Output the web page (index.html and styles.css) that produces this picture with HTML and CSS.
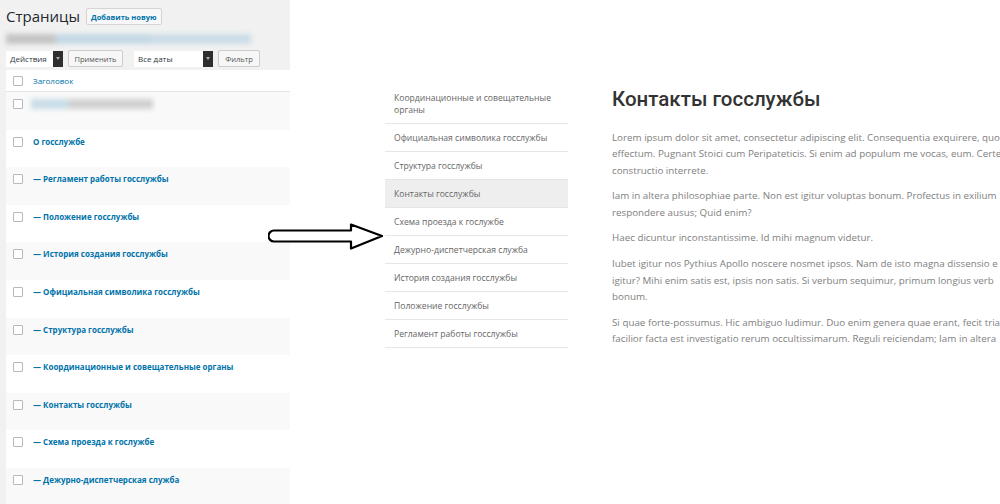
FILE: index.html
```html
<!DOCTYPE html>
<html lang="ru">
<head>
<meta charset="utf-8">
<title>Страницы</title>
<link rel="stylesheet" href="styles.css">
</head>
<body>
<div class="wp">
  <div class="wp-top">
    <div class="wp-title-row">
      <h1 class="wp-title">Страницы</h1>
      <span class="btn-add">Добавить новую</span>
    </div>
    <div class="wp-subsub"><span class="blur-gray"></span><span class="blur-blue"></span><span class="blur-blue2"></span></div>
    <div class="wp-filters">
      <span class="select sel-actions">Действия<span class="sel-arrow"></span></span>
      <span class="btn">Применить</span>
      <span class="select sel-dates">Все даты<span class="sel-arrow"></span></span>
      <span class="btn">Фильтр</span>
    </div>
  </div>
  <div class="wp-body">
    <div class="wp-strip"></div>
    <div class="wp-table">
      <div class="th"><span class="cb"></span><span class="th-label">Заголовок</span></div>
      <div class="tr alt"><span class="cb"></span><span class="blur-title"></span></div>
      <div class="tr"><span class="cb"></span><span class="t">О госслужбе</span></div>
      <div class="tr alt"><span class="cb"></span><span class="t">— Регламент работы госслужбы</span></div>
      <div class="tr"><span class="cb"></span><span class="t">— Положение госслужбы</span></div>
      <div class="tr alt"><span class="cb"></span><span class="t">— История создания госслужбы</span></div>
      <div class="tr"><span class="cb"></span><span class="t">— Официальная символика госслужбы</span></div>
      <div class="tr alt"><span class="cb"></span><span class="t">— Структура госслужбы</span></div>
      <div class="tr"><span class="cb"></span><span class="t">— Координационные и совещательные органы</span></div>
      <div class="tr alt"><span class="cb"></span><span class="t">— Контакты госслужбы</span></div>
      <div class="tr"><span class="cb"></span><span class="t">— Схема проезда к гослужбе</span></div>
      <div class="tr alt"><span class="cb"></span><span class="t">— Дежурно-диспетчерская служба</span></div>
    </div>
  </div>
</div>

<svg class="arrow" width="120" height="30" viewBox="0 0 120 30" aria-hidden="true">
  <path d="M6 7.5 H83 V1.5 L114 13 L83 25.5 V18.5 H6 A5.5 5.5 0 0 1 6 7.5 Z" fill="#fff" stroke="#000" stroke-width="2.2" stroke-linejoin="round"/>
</svg>

<nav class="side">
  <div class="side-item">Координационные и совещательные<br>органы</div>
  <div class="side-item">Официальная символика госслужбы</div>
  <div class="side-item">Структура госслужбы</div>
  <div class="side-item active">Контакты госслужбы</div>
  <div class="side-item">Схема проезда к гослужбе</div>
  <div class="side-item">Дежурно-диспетчерская служба</div>
  <div class="side-item">История создания госслужбы</div>
  <div class="side-item">Положение госслужбы</div>
  <div class="side-item">Регламент работы госслужбы</div>
</nav>

<main class="content">
  <h2 class="page-title">Контакты госслужбы</h2>
  <div class="text">
    <p>Lorem ipsum dolor sit amet, consectetur adipiscing elit. Consequentia exquirere, quo<br>effectum. Pugnant Stoici cum Peripateticis. Si enim ad populum me vocas, eum. Certe<br>constructio interrete.</p>
    <p>Iam in altera philosophiae parte. Non est igitur voluptas bonum. Profectus in exilium<br>respondere ausus; Quid enim?</p>
    <p>Haec dicuntur inconstantissime. Id mihi magnum videtur.</p>
    <p>Iubet igitur nos Pythius Apollo noscere nosmet ipsos. Nam de isto magna dissensio e<br>igitur? Mihi enim satis est, ipsis non satis. Si verbum sequimur, primum longius verb<br>bonum.</p>
    <p>Si quae forte-possumus. Hic ambiguo ludimur. Duo enim genera quae erant, fecit tria<br>facilior facta est investigatio rerum occultissimarum. Reguli reiciendam; Iam in altera</p>
  </div>
</main>
</body>
</html>
```

FILE: styles.css
```css
* { box-sizing: border-box; }
html, body { margin: 0; padding: 0; }
body {
  width: 1000px;
  height: 504px;
  overflow: hidden;
  background: #fff;
  display: flex;
  align-items: flex-start;
  position: relative;
  font-family: "Open Sans", "Noto Sans", sans-serif;
}

/* ---------- WordPress admin fragment ---------- */
.wp { width: 290px; flex: none; }
.wp-top {
  background: #f1f1f1;
  height: 70px;
  padding: 6px 0 0 6px;
}
.wp-title-row { display: flex; align-items: center; gap: 6px; height: 20px; }
.wp-title {
  margin: 0;
  font-weight: 400;
  font-size: 15px;
  line-height: 20px;
  color: #23282d;
}
.btn-add {
  display: inline-flex;
  align-items: center;
  height: 17px;
  padding: 0 4px;
  border: 1px solid #d5d5d5;
  border-radius: 2px;
  background: #f7f7f7;
  color: #0073aa;
  font-size: 7.5px;
  font-weight: 700;
  margin-top: 1px;
}
.wp-subsub { display: flex; height: 13px; margin-top: 6px; filter: blur(2.5px); }
.blur-gray { width: 50px; background: #c4c4c4; height: 10px; margin-top: 2px; }
.blur-blue { width: 95px; background: #c3d9e5; height: 10px; margin-top: 2px; }
.blur-blue2 { width: 100px; background: #cbdde7; height: 10px; margin-top: 2px; }

.wp-filters { display: flex; align-items: center; margin-top: 5px; height: 17px; }
.select {
  display: inline-flex;
  align-items: center;
  height: 16px;
  background: #fff;
  color: #32373c;
  font-size: 8px;
  padding-left: 4px;
}
.sel-actions { width: 57px; }
.sel-dates { width: 79px; margin-left: 11px; }
.sel-arrow {
  margin-left: auto;
  width: 10px;
  height: 16px;
  background: #2e2e2e;
  display: flex;
  align-items: center;
  justify-content: center;
}
.sel-arrow::after {
  content: "";
  border-left: 2px solid transparent;
  border-right: 2px solid transparent;
  border-top: 3px solid #aaa;
}
.btn {
  display: inline-flex;
  align-items: center;
  justify-content: center;
  height: 17px;
  border: 1px solid #ccc;
  border-radius: 2px;
  background: #f7f7f7;
  color: #555;
  font-size: 7.5px;
  margin-left: 5px;
}
.wp-filters .btn:nth-child(2) { width: 55px; }
.wp-filters .btn:nth-child(4) { width: 42px; }

.wp-body { display: flex; }
.wp-strip { width: 6px; background: #f1f1f1; align-self: stretch; }
.wp-table { width: 284px; }
.th {
  height: 22px;
  background: #fff;
  border-bottom: 1px solid #e5e5e5;
  display: flex;
  align-items: center;
}
.th-label { color: #0073aa; font-size: 8px; margin-left: 10px; }
.cb {
  width: 10px;
  height: 10px;
  border: 1px solid #b4b9be;
  border-radius: 1px;
  background: #fff;
  margin-left: 7px;
  flex: none;
}
.tr {
  height: 37.6px;
  display: flex;
  align-items: flex-start;
  background: #fff;
  padding-top: 7px;
}
.tr.alt { background: #f9f9f9; }
.t {
  color: #0073aa;
  font-weight: 700;
  font-size: 8px;
  line-height: 10px;
  margin-left: 10px;
}
.blur-title {
  display: block;
  width: 122px;
  height: 10px;
  margin-left: 8px;
  background: linear-gradient(90deg, #c9dde8 0, #c9dde8 30%, #d0d0d0 30%, #d0d0d0 100%);
  filter: blur(2.5px);
}

/* ---------- Arrow overlay ---------- */
.arrow {
  position: absolute;
  left: 268px;
  top: 223px;
}

/* ---------- Site side menu ---------- */
.side {
  width: 183px;
  margin-left: 95px;
  margin-top: 84px;
  flex: none;
}
.side-item {
  font-size: 8.6px;
  line-height: 12px;
  color: #666;
  padding: 8px 9px 7px;
  border-bottom: 1px solid #e6e6e6;
}
.side-item.active { background: #eee; }

/* ---------- Page content ---------- */
.content {
  margin-left: 44px;
  margin-top: 84px;
  flex: none;
  width: 500px;
}
.page-title {
  font-family: Roboto, "Open Sans", sans-serif;
  font-weight: 500;
  font-size: 20.5px;
  line-height: 30px;
  color: #333;
  margin: 0 0 16px;
}
.text { width: 388px; }
.text p {
  margin: 0 0 9.5px;
  font-size: 9.8px;
  line-height: 16.3px;
  color: #808080;
  white-space: nowrap;
}
```
